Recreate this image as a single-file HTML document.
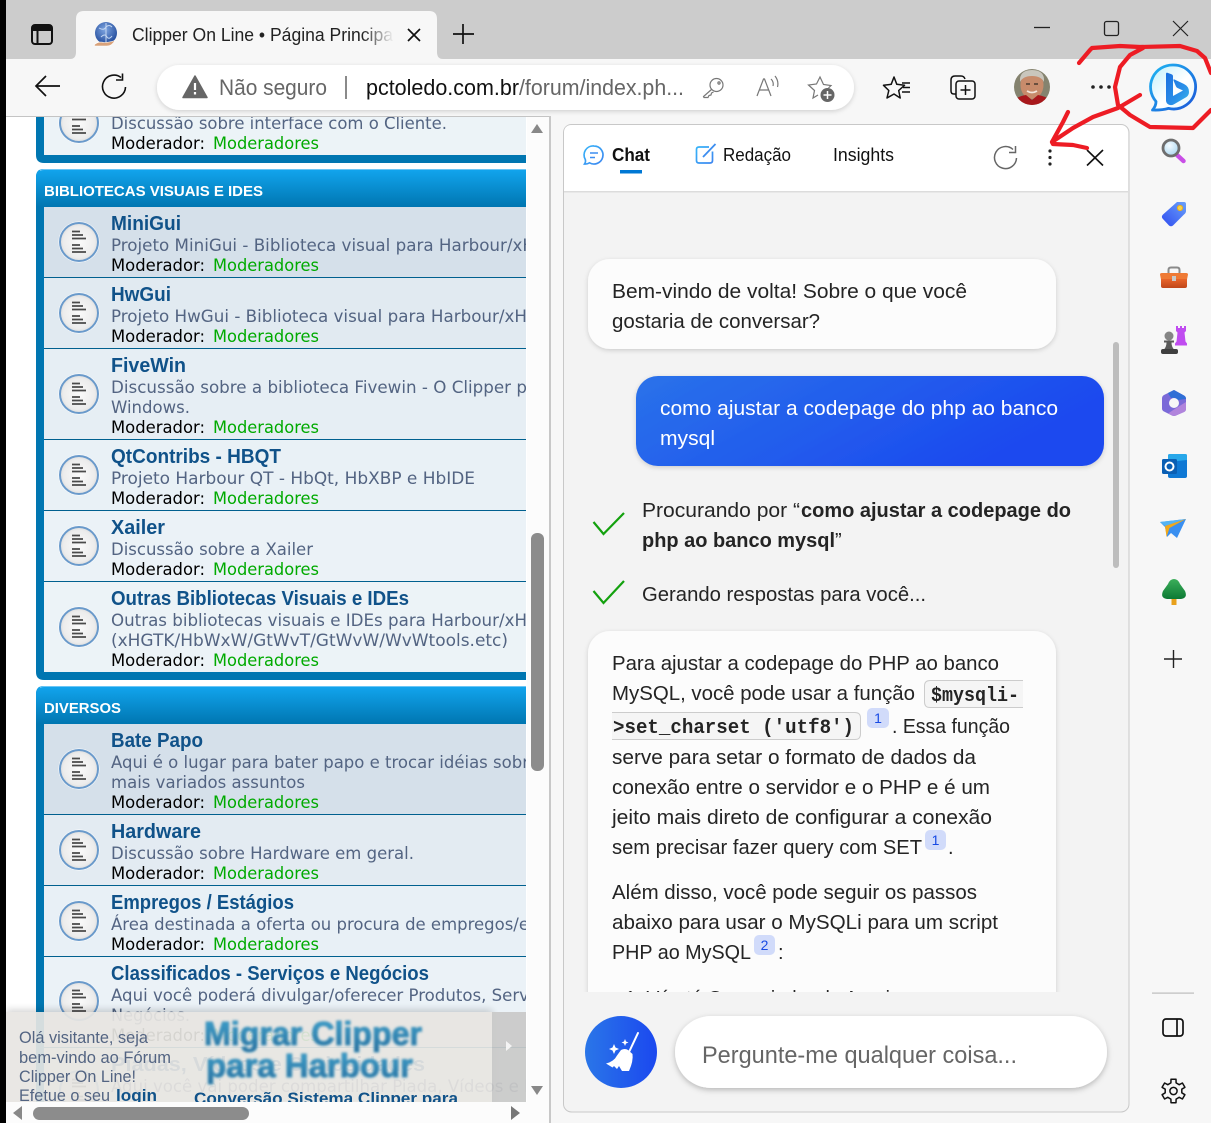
<!DOCTYPE html>
<html lang="pt-BR">
<head>
<meta charset="utf-8">
<title>Clipper On Line</title>
<style>
html,body{margin:0;padding:0;background:#f7f7f7;width:1211px;height:1123px;overflow:hidden}
svg{display:block}
text{font-family:"Liberation Sans","DejaVu Sans",sans-serif;white-space:pre}
.t{font:bold 20px "Liberation Sans",sans-serif;fill:#105289}
.d{font:16.5px "DejaVu Sans",sans-serif;fill:#536482}
.m{font:16.5px "DejaVu Sans",sans-serif;fill:#000}
.g{font:16.5px "DejaVu Sans",sans-serif;fill:#00aa00}
.h{font:bold 14.5px "Liberation Sans",sans-serif;fill:#fff}
.c{font:20px "Liberation Sans",sans-serif;fill:#242424}
.b{font:bold 20px "Liberation Sans",sans-serif;fill:#242424}
.w{font:20px "Liberation Sans",sans-serif;fill:#fff}
.o{font:bold 20px "Liberation Mono",monospace;fill:#242424}
.s{font:14px "Liberation Sans",sans-serif;fill:#174ae4;text-anchor:middle}
.v{font:17px "Liberation Sans",sans-serif;fill:#536482}
</style>
</head>
<body>
<svg xmlns="http://www.w3.org/2000/svg" width="1211" height="1123" viewBox="0 0 1211 1123">
<defs>
<linearGradient id="hd" x1="0" y1="0" x2="0" y2="1"><stop offset="0" stop-color="#12a5ee"/><stop offset="1" stop-color="#0076b1"/></linearGradient>
<linearGradient id="blue" x1="0" y1="0" x2="1" y2="0.35"><stop offset="0" stop-color="#2a72ea"/><stop offset="1" stop-color="#1b48ef"/></linearGradient>
<linearGradient id="blue2" x1="0" y1="0" x2="1" y2="0"><stop offset="0" stop-color="#2a76e8"/><stop offset="1" stop-color="#1b48ef"/></linearGradient>
<linearGradient id="fade" gradientUnits="userSpaceOnUse" x1="362" y1="0" x2="394" y2="0"><stop offset="0" stop-color="#222"/><stop offset="1" stop-color="#222" stop-opacity="0"/></linearGradient>
<linearGradient id="mig" x1="0" y1="0" x2="0" y2="1"><stop offset="0" stop-color="#3ea6d2"/><stop offset="1" stop-color="#2a6d9c"/></linearGradient>
<linearGradient id="bingb" x1="0" y1="0" x2="1" y2="1"><stop offset="0" stop-color="#1fb6f2"/><stop offset="1" stop-color="#1b56d8"/></linearGradient>
<linearGradient id="bingf" x1="0" y1="0" x2="1" y2="1"><stop offset="0" stop-color="#bff0fb"/><stop offset=".55" stop-color="#fff"/><stop offset="1" stop-color="#e2f6fc"/></linearGradient>
<linearGradient id="bingl" x1="0" y1="0" x2="1" y2="1"><stop offset="0" stop-color="#1a6fe0"/><stop offset=".6" stop-color="#2a8fe8"/><stop offset="1" stop-color="#38b6ea"/></linearGradient>
<linearGradient id="cyan" x1="0" y1="0" x2="1" y2="1"><stop offset="0" stop-color="#36b3f8"/><stop offset="1" stop-color="#3d86f0"/></linearGradient>
<linearGradient id="tag" x1="1" y1="0" x2="0" y2="1"><stop offset="0" stop-color="#6aa0fa"/><stop offset="1" stop-color="#2f4cf0"/></linearGradient>
<linearGradient id="box" x1="0" y1="0" x2="0" y2="1"><stop offset="0" stop-color="#e9652a"/><stop offset="1" stop-color="#c0461a"/></linearGradient>
<linearGradient id="tree" x1="0" y1="0" x2="0" y2="1"><stop offset="0" stop-color="#3cae5a"/><stop offset="1" stop-color="#0c7a34"/></linearGradient>
<radialGradient id="ic" cx=".5" cy=".5" r=".55"><stop offset="0" stop-color="#fafafa"/><stop offset=".75" stop-color="#ececec"/><stop offset="1" stop-color="#d4d4d4"/></radialGradient>
<radialGradient id="globe" cx=".45" cy=".35" r=".7"><stop offset="0" stop-color="#7fa6e2"/><stop offset="1" stop-color="#1c4596"/></radialGradient>
<radialGradient id="lens" cx=".4" cy=".35" r=".7"><stop offset="0" stop-color="#f4fbff"/><stop offset="1" stop-color="#a9d6f0"/></radialGradient>
<clipPath id="forum"><rect x="6" y="117" width="520" height="985"/></clipPath>
<clipPath id="chatclip"><rect x="564" y="192" width="564" height="800"/></clipPath>
<clipPath id="ovclip"><rect x="0" y="1000" width="530" height="102"/></clipPath>
<clipPath id="ava"><circle cx="1032" cy="87" r="18"/></clipPath>
<filter id="sh" x="-10%" y="-20%" width="120%" height="150%"><feDropShadow dx="0" dy="1.5" stdDeviation="2.5" flood-color="#000" flood-opacity=".16"/></filter>
<filter id="sh2" x="-10%" y="-30%" width="120%" height="170%"><feDropShadow dx="0" dy="2" stdDeviation="3" flood-color="#000" flood-opacity=".25"/></filter>
<filter id="ovs" x="-5%" y="-20%" width="110%" height="140%"><feDropShadow dx="0" dy="-2" stdDeviation="4" flood-color="#000" flood-opacity=".2"/></filter>
<filter id="bl" x="-5%" y="-20%" width="110%" height="140%"><feGaussianBlur stdDeviation="1.3"/></filter>
<symbol id="fi" viewBox="-22 -22 44 44" width="44" height="44">
<circle r="20.5" fill="#fff"/>
<circle r="19" fill="url(#ic)" stroke="#6a9acb" stroke-width="2"/>
<path d="M-7-10.500h8M-7-7h11M-7-3.500h14M-7 3h8M-7 6.500h11M-7 10h14" stroke="#4a4a4a" stroke-width="1.800" fill="none"/>
</symbol>
</defs>

<!-- window chrome -->
<rect width="1211" height="1123" fill="#f7f7f7"/>
<rect width="1211" height="59" fill="#cccccc"/>
<rect x="0" y="0" width="6" height="1123" fill="#000"/>
<rect x="6" y="59" width="1205" height="57" fill="#f7f7f7"/>
<rect x="6" y="116" width="544" height="1" fill="#c4c4c4"/>

<!-- tab -->
<path d="M70 59q6 0 6-7V19q0-8 8-8h345q8 0 8 8v33q0 7 6 7z" fill="#f7f7f7"/>
<rect x="32" y="25" width="20" height="19" rx="3" fill="none" stroke="#111" stroke-width="2"/>
<path d="M32 26h20v5H32z" fill="#111"/><path d="M37.500 30v14" stroke="#111" stroke-width="2"/>
<circle cx="106" cy="33" r="11" fill="url(#globe)"/>
<path d="M99 28q5 3 7-1 3-3 6 0M101 37q4-4 6 0 2 3 5-1M106 23v20" stroke="#c6d8f2" stroke-width="1" fill="none"/>
<path d="M94 45q4-4 10-2.500 5 0 11-2-3 5.500-8 5.500H95z" fill="#d9a27a" stroke="#fff" stroke-width=".6"/>
<text x="132" y="41" font-size="18" fill="url(#fade)" textLength="261" lengthAdjust="spacingAndGlyphs">Clipper On Line • Página Principa</text>
<path d="M408 29l12 12M420 29l-12 12" stroke="#111" stroke-width="1.700" fill="none"/>
<path d="M463 24v20M453 34h21" stroke="#111" stroke-width="1.700" fill="none"/>
<!-- window controls -->
<path d="M1034 27.500h16" stroke="#222" stroke-width="1.300"/>
<rect x="1104.500" y="21.500" width="14" height="14" rx="2" fill="none" stroke="#222" stroke-width="1.300"/>
<path d="M1173 21l15 15M1188 21l-15 15" stroke="#222" stroke-width="1.200" fill="none"/>

<!-- toolbar -->
<path d="M60 86H36M46 76L36 86l10 10" stroke="#111" stroke-width="1.700" fill="none"/>
<path d="M121 77.500A11.500 11.500 0 1 0 125.500 87M122.500 73.500v6.500h-6.500" stroke="#111" stroke-width="1.600" fill="none"/>
<rect x="157" y="65" width="697" height="45" rx="22.500" fill="#fff" filter="url(#sh)"/>
<path d="M195 76l12 21.500H183z" fill="#666" stroke="#666" stroke-width="1.500" stroke-linejoin="round"/>
<path d="M195 83v7M195 92v2.500" stroke="#fff" stroke-width="2.200"/>
<text x="219" y="95" font-size="22" fill="#666" textLength="108" lengthAdjust="spacingAndGlyphs">Não seguro</text>
<rect x="345" y="76" width="2" height="23" fill="#8a8a8a"/>
<text x="366" y="95" font-size="22" fill="#111" textLength="153" lengthAdjust="spacingAndGlyphs">pctoledo.com.br</text>
<text x="519" y="95" font-size="22" fill="#666" textLength="165" lengthAdjust="spacingAndGlyphs">/forum/index.ph...</text>
<g fill="none" stroke="#777" stroke-width="1.200">
<circle cx="716.500" cy="85" r="6.500"/><path d="M711.500 89.500l-8 7 .5 1h4l1-2 2-.5.5-2 2-1"/><circle cx="719" cy="83" r="1.100"/>
<path d="M757 96l6.500-17h1L771 96M759.500 90h9.500M771 79q3 3 2 7M775 76q4 5 2.500 11"/>
<path d="M818 95l-5 3 1.500-7.500-6-5.500 8-1L820 77l3.500 7.500 7.500 1-2.500 2.500"/>
</g>
<circle cx="827.500" cy="95" r="7" fill="#666"/><path d="M827.500 91v8M823.500 95h8" stroke="#fff" stroke-width="1.500"/>
<g fill="none" stroke="#111" stroke-width="1.500" stroke-linejoin="round">
<path d="M894 77l2.800 7.300 7.700 1-5.800 5.200 1.500 7.500-6.200-4-7 4 1.800-7.500-5.300-5.200 7.700-1z" fill="#f7f7f7" />
<path d="M902 83h8M903 87.500h7M902 92h8" stroke-width="1.400"/>
<path d="M956 94h-2q-3 0-3-3V80q0-4 4-4h6q3 0 4 3"/>
<rect x="956" y="81" width="19" height="18" rx="3" fill="#f7f7f7"/>
<path d="M965.500 85v10M960.500 90h10"/>
</g>
<!-- avatar -->
<g clip-path="url(#ava)">
<rect x="1014" y="69" width="36" height="36" fill="#85836f"/>
<ellipse cx="1032" cy="85" rx="11.500" ry="14" fill="#c78b6b"/>
<path d="M1020 82q-1-12 12-12 13 0 12 12-3-6-12-6-9 0-12 6z" fill="#c9c6bd"/>
<path d="M1027 91q5 3 10 0" stroke="#f3e6dc" stroke-width="1.800" fill="none"/>
<path d="M1026 84h4M1034 84h4" stroke="#4a3a30" stroke-width="1.500"/>
<path d="M1014 105v-5q5-4 12-5l6 5 6-5q7 1 12 5v5z" fill="#a8181c"/>
</g>
<g fill="#222"><circle cx="1093" cy="87" r="1.800"/><circle cx="1101" cy="87" r="1.800"/><circle cx="1109" cy="87" r="1.800"/></g>
<!-- bing -->
<path d="M1173.500 65a22 22 0 1 1-5 43.400q-7 2-16 1.600 3.500-4 3.500-8.500a22 22 0 0 1 17.500-36.500z" fill="url(#bingf)" stroke="url(#bingb)" stroke-width="2.800" stroke-linejoin="round"/>
<path d="M1166 74q0-2 2-1l3.500 1.200q1.500.5 1.500 2V96l10-5.500-5.500-2.500q-1-.5-1.500-1.500l-2.500-6q-.5-1.500 1-1l9.500 4.500q5 2.500 5 8 0 3-2.500 5l-12 7q-3 2-6 .5-2.500-1.500-2.500-4z" fill="url(#bingl)"/>

<!-- page area -->
<rect x="6" y="117" width="544" height="1006" fill="#fff"/>
<rect x="549" y="116" width="2" height="1007" fill="#c8c8c8"/>
<rect x="527" y="117" width="22" height="1006" fill="#fcfcfc"/>
<rect x="6" y="1102" width="543" height="21" fill="#fcfcfc"/>

<g clip-path="url(#forum)">
<!-- block 1 tail -->
<path d="M36 100h500v63H44q-8 0-8-8z" fill="#0076b1"/>
<rect x="44" y="100" width="490" height="55" fill="#ecf3f7"/>
<use href="#fi" x="57" y="101"/>
<text class="d" x="111" y="129" textLength="336" lengthAdjust="spacingAndGlyphs">Discussão sobre interface com o Cliente.</text>
<text class="m" x="111" y="149" textLength="94" lengthAdjust="spacingAndGlyphs">Moderador:</text><text class="g" x="213" y="149" textLength="106" lengthAdjust="spacingAndGlyphs">Moderadores</text>

<!-- block 2 -->
<path d="M44 169h490v511H44q-8 0-8-8V177q0-8 8-8z" fill="#0076b1"/>
<path d="M44 169h490v38H36V177q0-8 8-8z" fill="url(#hd)"/>
<path d="M40 170.500q2-1 4-1h490" stroke="#6cc6f5" stroke-width="1" fill="none"/>
<text class="h" x="44" y="196" textLength="219" lengthAdjust="spacingAndGlyphs">BIBLIOTECAS VISUAIS E IDES</text>
<rect x="44" y="207" width="490" height="70" fill="#d5e0ea"/>
<rect x="44" y="278" width="490" height="70" fill="#e1eaf1"/>
<rect x="44" y="349" width="490" height="90" fill="#e6eef4"/>
<rect x="44" y="440" width="490" height="70" fill="#e9f1f6"/>
<rect x="44" y="511" width="490" height="70" fill="#ebf2f7"/>
<rect x="44" y="582" width="490" height="90" fill="#ecf3f7"/>
<path d="M44 277.500h490M44 348.500h490M44 439.500h490M44 510.500h490M44 581.500h490" stroke="#00608f" stroke-width="1"/>
<use href="#fi" x="57" y="220"/><use href="#fi" x="57" y="291"/><use href="#fi" x="57" y="372"/><use href="#fi" x="57" y="453"/><use href="#fi" x="57" y="524"/><use href="#fi" x="57" y="605"/>

<text class="t" x="111" y="230" textLength="70" lengthAdjust="spacingAndGlyphs">MiniGui</text>
<text class="d" x="111" y="251" textLength="424" lengthAdjust="spacingAndGlyphs">Projeto MiniGui - Biblioteca visual para Harbour/xH</text>
<text class="m" x="111" y="271" textLength="94" lengthAdjust="spacingAndGlyphs">Moderador:</text><text class="g" x="213" y="271" textLength="106" lengthAdjust="spacingAndGlyphs">Moderadores</text>

<text class="t" x="111" y="301" textLength="60" lengthAdjust="spacingAndGlyphs">HwGui</text>
<text class="d" x="111" y="322" textLength="416" lengthAdjust="spacingAndGlyphs">Projeto HwGui - Biblioteca visual para Harbour/xH</text>
<text class="m" x="111" y="342" textLength="94" lengthAdjust="spacingAndGlyphs">Moderador:</text><text class="g" x="213" y="342" textLength="106" lengthAdjust="spacingAndGlyphs">Moderadores</text>

<text class="t" x="111" y="372" textLength="75" lengthAdjust="spacingAndGlyphs">FiveWin</text>
<text class="d" x="111" y="393" textLength="416" lengthAdjust="spacingAndGlyphs">Discussão sobre a biblioteca Fivewin - O Clipper p</text>
<text class="d" x="111" y="413" textLength="79" lengthAdjust="spacingAndGlyphs">Windows.</text>
<text class="m" x="111" y="433" textLength="94" lengthAdjust="spacingAndGlyphs">Moderador:</text><text class="g" x="213" y="433" textLength="106" lengthAdjust="spacingAndGlyphs">Moderadores</text>

<text class="t" x="111" y="463" textLength="170" lengthAdjust="spacingAndGlyphs">QtContribs - HBQT</text>
<text class="d" x="111" y="484" textLength="364" lengthAdjust="spacingAndGlyphs">Projeto Harbour QT - HbQt, HbXBP e HbIDE</text>
<text class="m" x="111" y="504" textLength="94" lengthAdjust="spacingAndGlyphs">Moderador:</text><text class="g" x="213" y="504" textLength="106" lengthAdjust="spacingAndGlyphs">Moderadores</text>

<text class="t" x="111" y="534" textLength="54" lengthAdjust="spacingAndGlyphs">Xailer</text>
<text class="d" x="111" y="555" textLength="202" lengthAdjust="spacingAndGlyphs">Discussão sobre a Xailer</text>
<text class="m" x="111" y="575" textLength="94" lengthAdjust="spacingAndGlyphs">Moderador:</text><text class="g" x="213" y="575" textLength="106" lengthAdjust="spacingAndGlyphs">Moderadores</text>

<text class="t" x="111" y="605" textLength="298" lengthAdjust="spacingAndGlyphs">Outras Bibliotecas Visuais e IDEs</text>
<text class="d" x="111" y="626" textLength="416" lengthAdjust="spacingAndGlyphs">Outras bibliotecas visuais e IDEs para Harbour/xH</text>
<text class="d" x="111" y="646" textLength="397" lengthAdjust="spacingAndGlyphs">(xHGTK/HbWxW/GtWvT/GtWvW/WvWtools.etc)</text>
<text class="m" x="111" y="666" textLength="94" lengthAdjust="spacingAndGlyphs">Moderador:</text><text class="g" x="213" y="666" textLength="106" lengthAdjust="spacingAndGlyphs">Moderadores</text>

<!-- block 3 -->
<path d="M44 686h490v430H36V694q0-8 8-8z" fill="#0076b1"/>
<path d="M44 686h490v38H36V694q0-8 8-8z" fill="url(#hd)"/>
<path d="M40 687.500q2-1 4-1h490" stroke="#6cc6f5" stroke-width="1" fill="none"/>
<text class="h" x="44" y="713" textLength="77" lengthAdjust="spacingAndGlyphs">DIVERSOS</text>
<rect x="44" y="724" width="490" height="90" fill="#d5e0ea"/>
<rect x="44" y="815" width="490" height="70" fill="#e3ebf2"/>
<rect x="44" y="886" width="490" height="70" fill="#e8f0f6"/>
<rect x="44" y="957" width="490" height="90" fill="#ebf2f7"/>
<rect x="44" y="1048" width="490" height="70" fill="#ecf3f7"/>
<path d="M44 814.500h490M44 885.500h490M44 956.500h490M44 1047.500h490" stroke="#00608f" stroke-width="1"/>
<use href="#fi" x="57" y="747"/><use href="#fi" x="57" y="828"/><use href="#fi" x="57" y="899"/><use href="#fi" x="57" y="979"/><use href="#fi" x="57" y="1068"/>

<text class="t" x="111" y="747" textLength="92" lengthAdjust="spacingAndGlyphs">Bate Papo</text>
<text class="d" x="111" y="768" textLength="418" lengthAdjust="spacingAndGlyphs">Aqui é o lugar para bater papo e trocar idéias sobr</text>
<text class="d" x="111" y="788" textLength="194" lengthAdjust="spacingAndGlyphs">mais variados assuntos</text>
<text class="m" x="111" y="808" textLength="94" lengthAdjust="spacingAndGlyphs">Moderador:</text><text class="g" x="213" y="808" textLength="106" lengthAdjust="spacingAndGlyphs">Moderadores</text>

<text class="t" x="111" y="838" textLength="90" lengthAdjust="spacingAndGlyphs">Hardware</text>
<text class="d" x="111" y="859" textLength="303" lengthAdjust="spacingAndGlyphs">Discussão sobre Hardware em geral.</text>
<text class="m" x="111" y="879" textLength="94" lengthAdjust="spacingAndGlyphs">Moderador:</text><text class="g" x="213" y="879" textLength="106" lengthAdjust="spacingAndGlyphs">Moderadores</text>

<text class="t" x="111" y="909" textLength="183" lengthAdjust="spacingAndGlyphs">Empregos / Estágios</text>
<text class="d" x="111" y="930" textLength="418" lengthAdjust="spacingAndGlyphs">Área destinada a oferta ou procura de empregos/e</text>
<text class="m" x="111" y="950" textLength="94" lengthAdjust="spacingAndGlyphs">Moderador:</text><text class="g" x="213" y="950" textLength="106" lengthAdjust="spacingAndGlyphs">Moderadores</text>

<text class="t" x="111" y="980" textLength="318" lengthAdjust="spacingAndGlyphs">Classificados - Serviços e Negócios</text>
<text class="d" x="111" y="1001" textLength="418" lengthAdjust="spacingAndGlyphs">Aqui você poderá divulgar/oferecer Produtos, Serv</text>
<text class="d" x="111" y="1021" textLength="79" lengthAdjust="spacingAndGlyphs">Negócios.</text>
<text class="m" x="111" y="1041" textLength="94" lengthAdjust="spacingAndGlyphs">Moderador:</text><text class="g" x="213" y="1041" textLength="106" lengthAdjust="spacingAndGlyphs">Moderadores</text>

<text class="t" x="111" y="1071" textLength="314" lengthAdjust="spacingAndGlyphs">Piadas, Vídeos e Curiosidades</text>
<text class="d" x="111" y="1092" textLength="418" lengthAdjust="spacingAndGlyphs">Aqui você vai poder compartilhar Piada, Vídeos e I</text>
</g>

<!-- floating banner -->
<g clip-path="url(#ovclip)">
<rect x="6" y="1012" width="486" height="100" fill="#e8e6e2" opacity=".92" filter="url(#ovs)"/>
<rect x="492" y="1012" width="34" height="100" fill="#c9c9c8" opacity=".93"/>
<path d="M506 1041l6 5-6 5z" fill="#f4f4f4"/>
<text class="v" x="19" y="1043" textLength="129" lengthAdjust="spacingAndGlyphs">Olá visitante, seja</text>
<text class="v" x="19" y="1063" textLength="152" lengthAdjust="spacingAndGlyphs">bem-vindo ao Fórum</text>
<text class="v" x="19" y="1082" textLength="117" lengthAdjust="spacingAndGlyphs">Clipper On Line!</text>
<text class="v" x="19" y="1101" textLength="91" lengthAdjust="spacingAndGlyphs">Efetue o seu</text>
<text class="v" x="116" y="1101" style="font-weight:bold;fill:#105289" textLength="41" lengthAdjust="spacingAndGlyphs">login</text>
<g filter="url(#bl)" fill="url(#mig)" stroke="#3a8fb8" stroke-width="1">
<text x="204" y="1045" font-size="33" font-weight="bold" textLength="218" lengthAdjust="spacingAndGlyphs">Migrar Clipper</text>
<text x="206" y="1077" font-size="33" font-weight="bold" textLength="207" lengthAdjust="spacingAndGlyphs">para Harbour</text>
</g>
<text x="194" y="1104" font-size="17" font-weight="bold" fill="#105289" textLength="264" lengthAdjust="spacingAndGlyphs">Conversão Sistema Clipper para</text>
</g>

<!-- scrollbars -->
<path d="M537 124l6 9h-12z" fill="#888"/>
<path d="M531 1086h12l-6 9z" fill="#888"/>
<rect x="531" y="533" width="13" height="238" rx="6" fill="#8c8c8c"/>
<path d="M22 1106v14l-9-7z" fill="#888"/>
<path d="M511 1106v14l9-7z" fill="#777"/>
<rect x="33" y="1107" width="216" height="13" rx="6.500" fill="#8c8c8c"/>

<!-- side panel -->
<rect x="563.500" y="124.500" width="565.500" height="987.500" rx="8" fill="#f3f3f3" stroke="#c8c8c8"/>
<path d="M564 191V133q0-8 8-8h548q8 0 8 8v58z" fill="#fff"/>
<rect x="564" y="191" width="564" height="1.500" fill="#dcdcdc"/>
<!-- tabs -->
<path d="M594 146a9 9 0 1 1-4.500 16.800q-2.500 1.500-5 1.200 1.500-2 .8-4.500A9 9 0 0 1 594 146z" fill="none" stroke="url(#cyan)" stroke-width="1.700"/>
<path d="M590 153h8M590 157.500h5" stroke="#3d8ef0" stroke-width="1.500" fill="none"/>
<text x="612" y="161" font-size="18" font-weight="bold" fill="#111" textLength="38" lengthAdjust="spacingAndGlyphs">Chat</text>
<rect x="620" y="170" width="22" height="3.500" fill="#0078d4"/>
<path d="M709 147h-10q-2.500 0-2.500 2.500v11q0 2.500 2.500 2.500h11q2.500 0 2.500-2.500v-9" fill="none" stroke="url(#cyan)" stroke-width="1.700"/>
<path d="M703 157l12.500-13" stroke="#3d8ef0" stroke-width="1.800" fill="none"/>
<text x="723" y="161" font-size="18" fill="#111" textLength="68" lengthAdjust="spacingAndGlyphs">Redação</text>
<text x="833" y="161" font-size="18" fill="#111" textLength="61" lengthAdjust="spacingAndGlyphs">Insights</text>
<path d="M1013 149.500A11 11 0 1 0 1016.500 158M1015.500 146v6.500h-6.500" fill="none" stroke="#666" stroke-width="1.500"/>
<g fill="#222"><circle cx="1050" cy="151" r="1.600"/><circle cx="1050" cy="157.500" r="1.600"/><circle cx="1050" cy="164" r="1.600"/></g>
<path d="M1087 150l16 15.500M1103 150l-16 15.500" stroke="#111" stroke-width="1.600" fill="none"/>

<!-- chat -->
<g clip-path="url(#chatclip)">
<rect x="588" y="259" width="468" height="90" rx="22" fill="#fcfcfc" filter="url(#sh)"/>
<text class="c" x="612" y="298" textLength="355" lengthAdjust="spacingAndGlyphs">Bem-vindo de volta! Sobre o que você</text>
<text class="c" x="612" y="328" textLength="208" lengthAdjust="spacingAndGlyphs">gostaria de conversar?</text>

<rect x="636" y="376" width="468" height="90" rx="22" fill="url(#blue)" filter="url(#sh)"/>
<text class="w" x="660" y="415" textLength="398" lengthAdjust="spacingAndGlyphs">como ajustar a codepage do php ao banco</text>
<text class="w" x="660" y="445" textLength="55" lengthAdjust="spacingAndGlyphs">mysql</text>

<path d="M593.500 522l10 12 20.500-21" fill="none" stroke="#13a10e" stroke-width="2.200"/>
<text class="c" x="642" y="517" textLength="158" lengthAdjust="spacingAndGlyphs">Procurando por “</text>
<text class="b" x="801" y="517" textLength="270" lengthAdjust="spacingAndGlyphs">como ajustar a codepage do</text>
<text class="b" x="642" y="547" textLength="193" lengthAdjust="spacingAndGlyphs">php ao banco mysql</text>
<text class="c" x="835" y="547">”</text>
<path d="M593.500 591l10 12 20.500-22" fill="none" stroke="#13a10e" stroke-width="2.200"/>
<text class="c" x="642" y="601" textLength="284" lengthAdjust="spacingAndGlyphs">Gerando respostas para você...</text>

<rect x="588" y="631" width="468" height="440" rx="22" fill="#fcfcfc" filter="url(#sh)"/>
<text class="c" x="612" y="670" textLength="387" lengthAdjust="spacingAndGlyphs">Para ajustar a codepage do PHP ao banco</text>
<text class="c" x="612" y="700" textLength="303" lengthAdjust="spacingAndGlyphs">MySQL, você pode usar a função</text>
<path d="M1023 680.500h-93q-5.500 0-5.500 5.500v16q0 5.500 5.500 5.500h93" fill="#f5f5f5" stroke="#ccc"/>
<text class="o" x="931" y="701" textLength="88" lengthAdjust="spacingAndGlyphs">$mysqli-</text>
<path d="M612 712.500h243q5.500 0 5.500 5.500v16q0 5.500-5.500 5.500H612" fill="#f5f5f5" stroke="#ccc"/>
<text class="o" x="613" y="733" textLength="241" lengthAdjust="spacingAndGlyphs">&gt;set_charset ('utf8')</text>
<rect x="867" y="708" width="22" height="20" rx="5" fill="#d1dbfa"/>
<text class="s" x="878" y="723">1</text>
<text class="c" x="892" y="733" textLength="118" lengthAdjust="spacingAndGlyphs">. Essa função</text>
<text class="c" x="612" y="764" textLength="364" lengthAdjust="spacingAndGlyphs">serve para setar o formato de dados da</text>
<text class="c" x="612" y="794" textLength="378" lengthAdjust="spacingAndGlyphs">conexão entre o servidor e o PHP e é um</text>
<text class="c" x="612" y="824" textLength="380" lengthAdjust="spacingAndGlyphs">jeito mais direto de configurar a conexão</text>
<text class="c" x="612" y="854" textLength="310" lengthAdjust="spacingAndGlyphs">sem precisar fazer query com SET</text>
<rect x="925" y="830" width="21" height="20" rx="5" fill="#d1dbfa"/>
<text class="s" x="935.500" y="845">1</text>
<text class="c" x="948" y="854">.</text>
<text class="c" x="612" y="899" textLength="365" lengthAdjust="spacingAndGlyphs">Além disso, você pode seguir os passos</text>
<text class="c" x="612" y="929" textLength="386" lengthAdjust="spacingAndGlyphs">abaixo para usar o MySQLi para um script</text>
<text class="c" x="612" y="959" textLength="139" lengthAdjust="spacingAndGlyphs">PHP ao MySQL</text>
<rect x="754" y="935" width="21" height="20" rx="5" fill="#d1dbfa"/>
<text class="s" x="764.500" y="950">2</text>
<text class="c" x="778" y="959">:</text>
<text class="c" x="625" y="1005" textLength="295" lengthAdjust="spacingAndGlyphs">1. Vá até Gerenciador de Arquivos</text>
</g>
<rect x="1113" y="342" width="6" height="226" rx="3" fill="#bdbdbd"/>

<!-- input -->
<circle cx="621" cy="1052" r="36" fill="url(#blue2)"/>
<path d="M638 1033l-8.500 18" stroke="#fff" stroke-width="2" stroke-linecap="round"/>
<path d="M621 1050q4-2 7 0l4.500 4q1 7-3.500 17h-7l-3-5-2 3-3-3-1.500 1.500-6.500-4q8-2 11-8z" fill="#fff"/>
<path d="M614 1044l1.500 3.500 3.500 1.500-3.500 1.500-1.500 3.500-1.500-3.500-3.500-1.500 3.500-1.500zM625 1039l1 2.500 2.500 1-2.500 1-1 2.500-1-2.500-2.500-1 2.500-1z" fill="#fff"/>
<rect x="675" y="1016" width="432" height="72" rx="36" fill="#fff" filter="url(#sh2)"/>
<text x="702" y="1063" font-size="24" fill="#666" textLength="315" lengthAdjust="spacingAndGlyphs">Pergunte-me qualquer coisa...</text>

<!-- sidebar icons -->
<!-- search -->
<path d="M1177 155l6.500 6" stroke="#c94fe6" stroke-width="4.500" stroke-linecap="round"/>
<circle cx="1171" cy="148" r="8" fill="url(#lens)" stroke="#6e6e6e" stroke-width="2.800"/>
<!-- tag -->
<path d="M1177 202h7q2 0 2 2v7q0 2-2 3.500l-11 11q-2 1.500-4 0l-6.500-7q-1.500-2 .5-4z" fill="url(#tag)"/>
<circle cx="1180" cy="208" r="2.600" fill="#f7d24a" stroke="#e8b020"/>
<!-- toolbox -->
<path d="M1168.500 273v-3q0-2.500 2.500-2.500h6q2.500 0 2.500 2.500v3" fill="none" stroke="#8a8a8a" stroke-width="2"/>
<path d="M1160 274.500q0-1.500 2-1.500h24q2 0 2 1.500l-1 5h-26z" fill="#ef7a35"/>
<path d="M1161 279h26v7q0 2-2 2h-22q-2 0-2-2z" fill="url(#box)"/>
<rect x="1172" y="276" width="4" height="5" fill="#c9c9c9"/>
<!-- chess -->
<path d="M1176 326h2v2h2v-2h2v2h2v-2h2v5l-1.500 1.500 1 9 1.500 2v2h-12v-2l1.500-2 1-9-1.500-1.500z" fill="#c04cf0"/>
<circle cx="1169" cy="336" r="4.500" fill="#858585"/>
<path d="M1164 340.500h10v2h-2.500q0 4 2.500 7h-10q2.500-3 2.500-7H1164z" fill="#5a5a5a"/>
<rect x="1161" y="349" width="17" height="5" rx="2" fill="#3f3f3f"/>
<!-- m365 -->
<path d="M1174 390l10 5.500q2 1 2 3.500v10q0 2-2 3l-8 3.500q-2 1-4 0l-8-4q-2-1-2-3v-10q0-2.500 2-3.500z" fill="#7b6ad8"/>
<path d="M1174 390l10 5.500q2 1 2 3.500l-8 1q-3-3-7-2l-3-5z" fill="#2f6fd6"/>
<path d="M1186 402v7q0 2-2 3l-8 3.500q-2 1-4 0l-4-2 9-6z" fill="#b184dc"/>
<circle cx="1174" cy="403" r="5" fill="#f7f7f7"/>
<!-- outlook -->
<rect x="1168" y="454" width="19" height="22" rx="1.500" fill="#28a8ea"/>
<path d="M1168 466l9.500-5 9.500-1v16q0 2-2 2h-15q-2 0-2-2z" fill="#0f78d4"/>
<rect x="1162" y="459" width="15" height="15" rx="1.500" fill="#0a5fb4"/>
<circle cx="1169.500" cy="466.500" r="4" fill="none" stroke="#fff" stroke-width="2"/>
<!-- send -->
<path d="M1160 522l26-3-9 19-6-5-4 4-2-10z" fill="#3a8ff0"/>
<path d="M1160 522l26-3-21 7z" fill="#54b4f5"/>
<path d="M1186 519l-21 7 1.500 11 3-9z" fill="#f0a81c"/>
<!-- tree -->
<rect x="1171.500" y="598" width="5" height="7" fill="#e8a11c"/>
<path d="M1174 579q4 0 6 5l5 7q3 7-4 8h-14q-7-1-4-8l5-7q2-5 6-5z" fill="url(#tree)"/>
<path d="M1173.500 650v18M1164 659h18" stroke="#222" stroke-width="1.400" fill="none"/>
<rect x="1152" y="992.500" width="42" height="1.200" fill="#bdbdbd"/>
<rect x="1163" y="1019" width="20" height="17" rx="3" fill="none" stroke="#111" stroke-width="1.700"/>
<path d="M1177 1019v17" stroke="#111" stroke-width="1.700"/>
<g transform="translate(1173.500 1091)" fill="none" stroke="#111" stroke-width="1.500" stroke-linejoin="round">
<path d="M-2.500-11.700L2.500-11.700 2.600-8.100 5.700-6.300 8.900-8 11.400-3.700 8.300-1.800 8.300 1.800 11.400 3.700 8.900 8 5.700 6.300 2.600 8.100 2.500 11.700-2.500 11.700-2.600 8.100-5.700 6.300-8.900 8-11.400 3.700-8.300 1.800-8.300-1.800-11.400-3.700-8.900-8-5.700-6.300-2.600-8.100z"/>
<circle r="3.600"/>
</g>

<!-- red annotations -->
<g fill="none" stroke="#ed1c24" stroke-width="4.200" stroke-linecap="round" stroke-linejoin="round">
<path d="M1079 63L1090 50 1092 48 1120 46 1140 47 1180 46 1197 51 1205 58 1211 73"/>
<path d="M1211 110L1193 128 1150 127 1130 115 1118 105 1115 87 1120 67 1130 55 1143 48"/>
<path d="M1140 95L1118 108 1093 117 1073 128 1052 142"/>
<path d="M1068 112L1063 122 1052 142 1053 144 1073 145 1087 148"/>
</g>
</svg>
</body>
</html>
